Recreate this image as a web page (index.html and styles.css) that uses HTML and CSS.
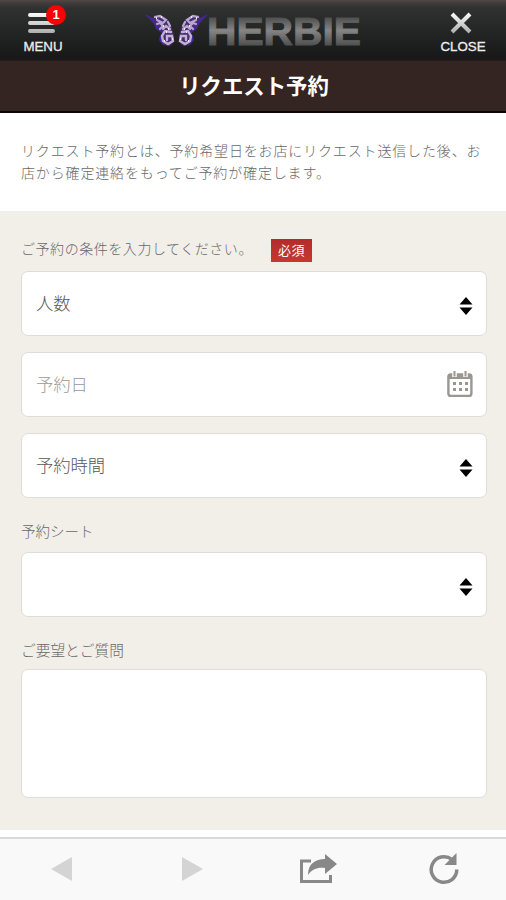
FILE: index.html
```html
<!DOCTYPE html>
<html lang="ja">
<head>
<meta charset="utf-8">
<meta name="viewport" content="width=device-width">
<title>リクエスト予約</title>
<link rel="stylesheet" href="styles.css">
</head>
<body>
<header class="topbar">
  <button class="nav-button menu" type="button">
    <svg width="28" height="22" viewBox="0 0 28 22">
      <defs><linearGradient id="metal" gradientUnits="userSpaceOnUse" x1="0" y1="0" x2="0" y2="22"><stop offset="0" stop-color="#fff"/><stop offset="1" stop-color="#aaa"/></linearGradient></defs>
      <path d="M2 3H25M2 11H25M2 19H25" stroke="url(#metal)" stroke-width="4" stroke-linecap="round"/>
    </svg>
    <span class="nav-text">MENU</span>
    <span class="badge">1</span>
  </button>
  <svg class="logo" width="224" height="44" viewBox="0 0 224 44">
    <defs>
      <linearGradient id="steel" gradientUnits="userSpaceOnUse" x1="0" y1="5" x2="0" y2="34"><stop offset="0" stop-color="#484848"/><stop offset=".5" stop-color="#858585"/><stop offset="1" stop-color="#505050"/></linearGradient>
      <g id="wing">
        <path d="M0 3L7 6L8 3L15 3L21 7L25 13L28 23L28 30L24 34L17 33L13 28L16 21L10 17L8 12Z" fill="#44306a"/>
        <path d="M0 3L8 9L10 14L17 21L14 26L17 32" fill="none" stroke="#4323b0" stroke-width="1.5"/>
        <path d="M9 5L14 4L20 8L17 11L11 8M11 12L14 11L17 14L14 17M17 17L20 14L24 17M22 10L24 14" fill="none" stroke="#bba6d3" stroke-width="2.2" stroke-linecap="round"/>
        <path d="M25 20L19 19L16 24L17 29L22 32L27 29L26 24L21 24L21 28" fill="none" stroke="#c5b0d8" stroke-width="2.4" stroke-linecap="round"/>
        <path d="M10 6h1M15 5h1M17 14h1M22 17h1M20 20h1M18 29h1M26 27h1" stroke="#f2e8f5" stroke-width="2"/>
      </g>
    </defs>
    <use href="#wing" x="1" y="1"/>
    <use href="#wing" transform="translate(62 1) scale(-1 1)"/>
    <text x="62" y="33.5" class="wordmark" textLength="154" lengthAdjust="spacingAndGlyphs" fill="url(#steel)" stroke="url(#steel)">HERBIE</text>
  </svg>
  <button class="nav-button close" type="button">
    <svg width="24" height="22" viewBox="0 0 24 22"><path d="M3 2L21 20M21 2L3 20" stroke="url(#metal)" stroke-width="4"/></svg>
    <span class="nav-text">CLOSE</span>
  </button>
</header>
<h1 class="page-title">リクエスト予約</h1>
<main>
  <p class="intro">リクエスト予約とは、予約希望日をお店にリクエスト送信した後、お店から確定連絡をもってご予約が確定します。</p>
  <form class="request">
    <div class="prompt"><span>ご予約の条件を入力してください。</span><span class="required">必須</span></div>
    <div class="field">
      <span>人数</span>
      <svg class="sorter" width="14" height="20" viewBox="0 0 14 20"><path d="M.5 8.5L7 1L13.5 8.5ZM.5 11.5H13.5L7 19Z"/></svg>
    </div>
    <div class="field date">
      <span>予約日</span>
      <svg class="calendar" width="28" height="28" viewBox="0 0 28 28">
        <rect x="2.4" y="4.4" width="23" height="21.5" rx="2.5" fill="#fff" stroke="#99978f" stroke-width="2.4"/>
        <path d="M2 4H26V9H2Z" fill="#99978f"/>
        <path d="M8.5 1V7M19.5 1V7" stroke="#fff" stroke-width="4.5"/>
        <path d="M8.5 1V6.5M19.5 1V6.5" stroke="#99978f" stroke-width="2"/>
        <path d="M7 13.5H22M7 19.5H22" stroke="#99978f" stroke-width="3" stroke-dasharray="3 3"/>
      </svg>
    </div>
    <div class="field">
      <span>予約時間</span>
      <svg class="sorter" width="14" height="20" viewBox="0 0 14 20"><path d="M.5 8.5L7 1L13.5 8.5ZM.5 11.5H13.5L7 19Z"/></svg>
    </div>
    <div class="label">予約シート</div>
    <div class="field">
      <span></span>
      <svg class="sorter" width="14" height="20" viewBox="0 0 14 20"><path d="M.5 8.5L7 1L13.5 8.5ZM.5 11.5H13.5L7 19Z"/></svg>
    </div>
    <div class="label questions">ご要望とご質問</div>
    <div class="field message"></div>
  </form>
</main>
<nav class="toolbar">
  <svg width="24" height="26" viewBox="0 0 24 26"><path d="M1 12L22 0V24Z" fill="#d4d4d4"/></svg>
  <svg width="24" height="26" viewBox="0 0 24 26"><path d="M2 0V24L23 12Z" fill="#d4d4d4"/></svg>
  <svg width="38" height="32" viewBox="0 0 38 32"><path d="M12 7H2.5V27.5H31.5V21" fill="none" stroke="#888" stroke-width="3"/><path d="M9 21C9 10 16 5 26 5V0L38 10L26 20V14C19 13 13 15 9 21Z" fill="#888"/></svg>
  <svg width="32" height="34" viewBox="0 0 32 34"><path d="M24 6.5A12.8 12.8 0 1 0 28.8 16.5" fill="none" stroke="#888" stroke-width="3.5"/><path d="M28.5 0V12H16.5Z" fill="#888"/></svg>
</nav>
</body>
</html>
```

FILE: styles.css
```css
* { box-sizing: border-box; }
body {
  margin: 0;
  width: 506px;
  height: 900px;
  overflow: hidden;
  display: flex;
  flex-direction: column;
  background: #fff;
  color: #686868;
  font-family: "Liberation Sans", "Noto Sans CJK JP", sans-serif;
  font-weight: 300;
}
svg { display: block; flex: none; }
.topbar {
  height: 61px;
  flex: none;
  display: flex;
  justify-content: space-between;
  background: linear-gradient(#514846 0, #403c3b 3px, #303231 8px, #1b1c1c 50px, #191818 59px, #261e1d 61px);
}
.nav-button {
  position: relative;
  width: 86px;
  flex: none;
  margin: 0;
  padding: 12px 0 0;
  border: 0;
  background: none;
  display: flex;
  flex-direction: column;
  align-items: center;
  font-family: "Liberation Sans", sans-serif;
}
.menu svg { margin-right: 3px; }
.nav-text { font-size: 13.3px; line-height: 15px; margin-top: 5px; color: #eee; -webkit-text-stroke: .3px #eee; }
.close svg { margin-right: 4px; }
.badge {
  position: absolute;
  left: 46px;
  top: 5px;
  width: 20px;
  height: 20px;
  border-radius: 50%;
  background: #fa0000;
  color: #fff;
  font-size: 13px;
  font-weight: 700;
  line-height: 20px;
  text-align: center;
}
.logo { margin: 11px 0 0 7px; }
.wordmark { font: 700 39px "Liberation Sans", sans-serif; stroke-width: 1px; }
.page-title {
  height: 52px;
  flex: none;
  margin: 0;
  border-bottom: 2px solid #0c0504;
  background: #342422;
  color: #fff;
  font-size: 21.4px;
  line-height: 53px;
  font-weight: 700;
  text-align: center;
  padding-left: 2px;
}
main { flex: 1; }
.intro {
  margin: 0;
  height: 98px;
  padding: 27px 20px 0 21px;
  font-size: 14px;
  letter-spacing: .85px;
  line-height: 22px;
}
.request { height: 619px; padding: 25px 19px 0 21px; background: #f2efe9; }
.prompt { height: 35px; display: flex; align-items: flex-start; gap: 18px; font-size: 14px; letter-spacing: .55px; line-height: 26px; }
.required {
  width: 41px;
  height: 23px;
  margin-top: 3px;
  background: linear-gradient(#b52b2a, #c53833);
  color: #fff;
  font-size: 13px;
  line-height: 23px;
  text-align: center;
  font-weight: 400;
}
.field {
  height: 65px;
  margin-bottom: 16px;
  padding: 0 13px 0 14px;
  border: 1px solid #dfddd9;
  border-radius: 7px;
  background: #fff;
  display: flex;
  align-items: center;
  justify-content: space-between;
  font-size: 17.3px;
  line-height: 24px;
  color: #585858;
}
.field span { margin-top: 1px; }
.date { color: #999; padding-right: 12px; }
.sorter { margin-top: 5px; }
.calendar { margin-top: -2px; }
.label { height: 38px; padding-top: 8px; font-size: 14.5px; line-height: 20px; }
.questions { height: 36px; padding-top: 8px; font-size: 14.7px; }
.message { height: 129px; margin: 0; }
.toolbar {
  height: 63px;
  flex: none;
  padding: 0 46px 0 50px;
  border-top: 2px solid #d9dadb;
  background: #f9f9f9;
  display: grid;
  grid-template-columns: 130px 119px 129px 32px;
  align-items: center;
}
```
